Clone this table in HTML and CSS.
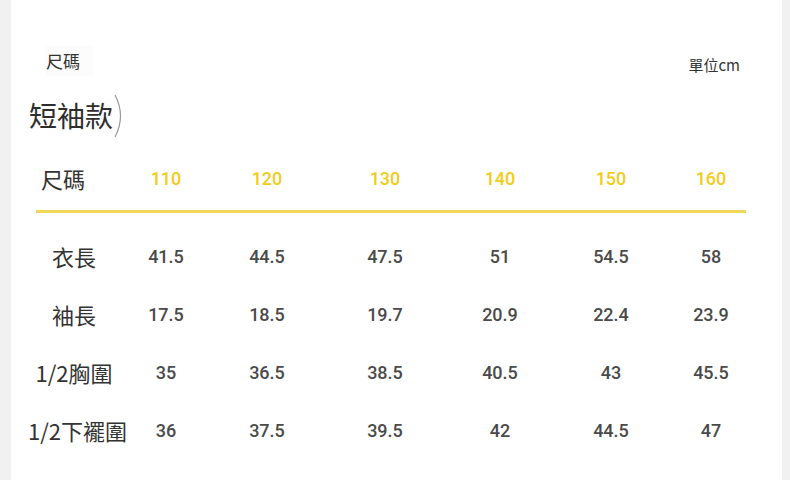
FILE: index.html
```html
<!DOCTYPE html>
<html lang="zh-Hant">
<head>
<meta charset="utf-8">
<link rel="stylesheet" href="styles.css">
</head>
<body>
<div class="page">
  <div class="side side-left"></div>
  <main class="card">
    <div class="top">
      <span class="tag">尺碼</span>
      <span class="unit">單位cm</span>
    </div>
    <div class="title">
      <span>短袖款</span>
      <svg class="paren" width="14" height="44" viewBox="0 0 14 44"><path d="M2 1 Q13 22 2 43" fill="none" stroke="#9a9a9a" stroke-width="1.2"/></svg>
    </div>
    <div class="table">
      <div class="row head">
        <div class="label">尺碼</div>
        <div class="size">110</div>
        <div class="size">120</div>
        <div class="size">130</div>
        <div class="size">140</div>
        <div class="size">150</div>
        <div class="size">160</div>
      </div>
      <div class="rule"></div>
      <div class="row">
        <div class="label">衣長</div>
        <div class="val">41.5</div><div class="val">44.5</div><div class="val">47.5</div><div class="val">51</div><div class="val">54.5</div><div class="val">58</div>
      </div>
      <div class="row">
        <div class="label">袖長</div>
        <div class="val">17.5</div><div class="val">18.5</div><div class="val">19.7</div><div class="val">20.9</div><div class="val">22.4</div><div class="val">23.9</div>
      </div>
      <div class="row">
        <div class="label">1/2胸圍</div>
        <div class="val">35</div><div class="val">36.5</div><div class="val">38.5</div><div class="val">40.5</div><div class="val">43</div><div class="val">45.5</div>
      </div>
      <div class="row">
        <div class="label">1/2下襬圍</div>
        <div class="val">36</div><div class="val">37.5</div><div class="val">39.5</div><div class="val">42</div><div class="val">44.5</div><div class="val">47</div>
      </div>
    </div>
  </main>
  <div class="side side-right"></div>
</div>
</body>
</html>
```
FILE: styles.css
```css
html, body {
  margin: 0;
  padding: 0;
  background: #ffffff;
}
.page {
  display: flex;
  width: 790px;
  height: 480px;
  overflow: hidden;
  font-family: "Noto Sans CJK TC", "Noto Sans", sans-serif;
  color: #333;
}
.side {
  background: #f1f1f1;
  flex: none;
}
.side-left { width: 11px; }
.side-right { width: 8px; }
.card {
  flex: 1;
  background: #fff;
  display: flex;
  flex-direction: column;
}
.top {
  display: flex;
  justify-content: space-between;
  align-items: center;
  padding: 46px 42px 0 35px;
  height: 30px;
}
.tag {
  font-size: 17px;
  line-height: 30px;
  padding: 0 13px 0 0;
  color: #333;
  background: #fcfcfc;
}
.unit {
  font-size: 15px;
  margin-top: 6px;
  color: #333;
}
.title {
  display: flex;
  align-items: center;
  margin: 17px 0 0 18px;
  height: 44px;
}
.title span {
  font-size: 28px;
  line-height: 40px;
  color: #2e2e2e;
}
.paren {
  margin-top: 2px;
}
.table {
  margin: 19px 0 0 17px;
  display: flex;
  flex-direction: column;
}
.row {
  display: grid;
  grid-template-columns: 92px 92px 110px 126px 104px 118px 82px;
  align-items: center;
  height: 58px;
}
.row.head {
  height: 44px;
}
.label {
  text-align: center;
  font-size: 22px;
  color: #333;
  white-space: nowrap;
}
.head .label {
  text-align: left;
  padding-left: 13px;
}
.size {
  text-align: center;
  font-family: "Roboto", "Liberation Sans", sans-serif;
  font-size: 18px;
  font-weight: 500;
  color: #f1cc1a;
}
.val {
  text-align: center;
  font-family: "Roboto", "Liberation Sans", sans-serif;
  font-size: 18px;
  font-weight: 500;
  color: #4a4a4a;
}
.rule {
  height: 3px;
  background: #f0d85a;
  margin: 10px 0 14px 8px;
  width: 710px;
}
```
